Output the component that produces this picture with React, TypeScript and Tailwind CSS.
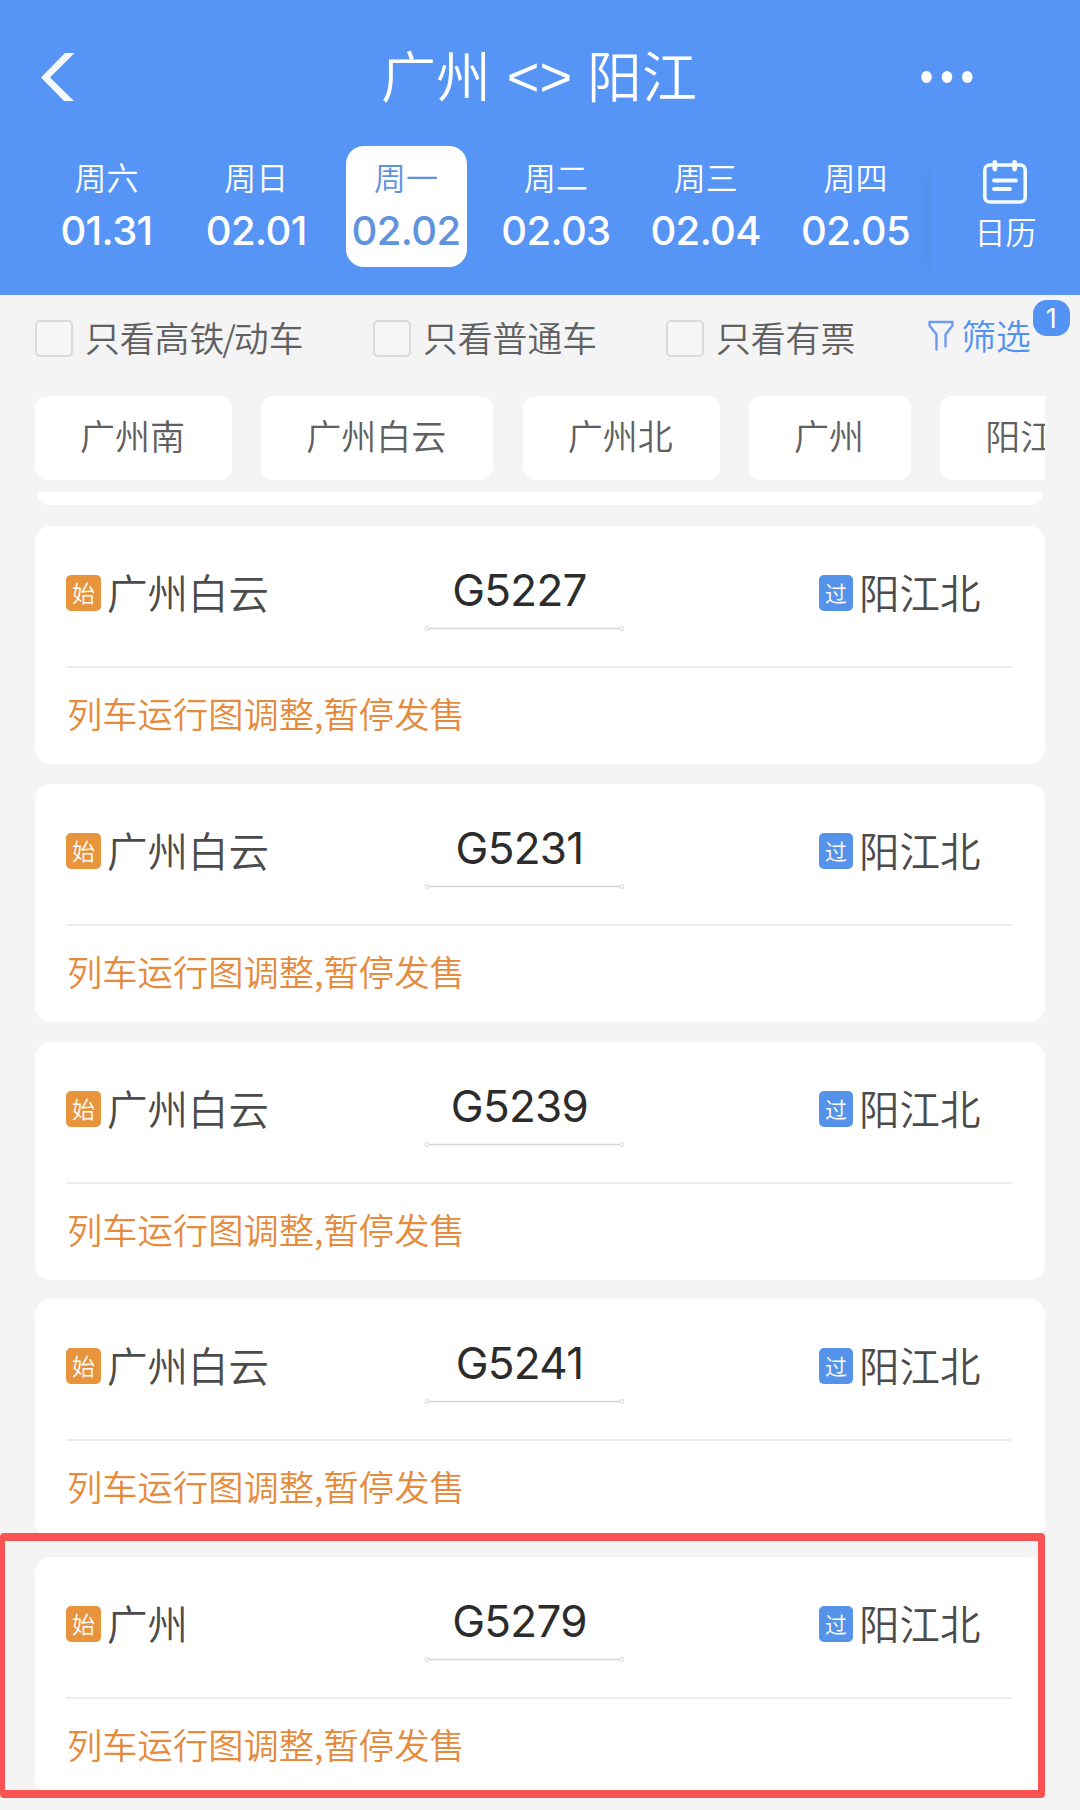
const days = [
  { week: "周六", date: "01.31" },
  { week: "周日", date: "02.01" },
  { week: "周一", date: "02.02", active: true },
  { week: "周二", date: "02.03" },
  { week: "周三", date: "02.04" },
  { week: "周四", date: "02.05" },
];

const stations = ["广州南", "广州白云", "广州北", "广州", "阳江"];

const trains = [
  { from: "广州白云", code: "G5227", to: "阳江北" },
  { from: "广州白云", code: "G5231", to: "阳江北" },
  { from: "广州白云", code: "G5239", to: "阳江北" },
  { from: "广州白云", code: "G5241", to: "阳江北" },
  { from: "广州", code: "G5279", to: "阳江北" },
];

function BackIcon() {
  return (
    <svg aria-hidden="true" className="h-12 w-[34px]" viewBox="0 0 34 48" fill="#f4fbff">
      <path d="M24 0h9.500L9 24.500 33 48H23L0 24.500 24 0Z" />
    </svg>
  );
}

function MoreIcon() {
  return (
    <svg aria-hidden="true" className="h-3 w-[52px]" viewBox="0 0 52 12" fill="#fff">
      <ellipse cx="5.5" cy="6" rx="5.3" ry="6" />
      <ellipse cx="26" cy="6" rx="5.3" ry="6" />
      <ellipse cx="46.3" cy="6" rx="5.3" ry="6" />
    </svg>
  );
}

function CalendarIcon() {
  return (
    <svg aria-hidden="true" className="h-11 w-[46px]" viewBox="0 0 46 44" fill="none" stroke="#f4fbff" strokeLinecap="round">
      <rect x="2.8" y="5" width="40.4" height="37" rx="5" strokeWidth="3.6" />
      <path d="M12.800 2.500v6.500M32.600 2.500v6.500" strokeWidth="4.8" />
      <path d="M12 20.500h22M12 29h16" strokeWidth="3.8" />
    </svg>
  );
}

function FunnelIcon() {
  return (
    <svg aria-hidden="true" className="h-[31px] w-[26px]" viewBox="0 0 26 31" fill="none" stroke="#6f9bef" strokeWidth="2.4" strokeLinejoin="round" strokeLinecap="round">
      <path d="M8.500 29.500V14.500L1.500 5.500V2h23v3.500L17.500 14.500V26.500" />
    </svg>
  );
}

function CheckItem({ label }: { label: string }) {
  return (
    <label className="flex items-start gap-[12px]">
      <span className="h-[37px] w-[38px] rounded-[5px] border-2 border-[#d9dadc] bg-[#f5f6f7]" />
      <span className="-mt-[2px] whitespace-nowrap text-[34.800px] leading-[38px] text-[#5f6062]">
        {label.split("/").map((part, i) => (
          <span key={part}>
            {i > 0 && <span className="-mx-[2px]">/</span>}
            {part}
          </span>
        ))}
      </span>
    </label>
  );
}

function TrainCard({ from, code, to }: { from: string; code: string; to: string }) {
  return (
    <article className="h-[238px] shrink-0 rounded-[16px] bg-white pl-[31px] pr-[33px]">
      <div className="flex h-[142px] border-b-2 border-[#ececed] pt-[43px]">
        <div className="flex w-[358px] items-start">
          <span className="mt-[6px] grid h-[36px] w-[35px] place-items-center rounded-[5px] bg-[#e8943c] pb-px text-[23px] leading-none text-white">始</span>
          <span className="-mt-px ml-[6px] text-[40.500px] leading-[48px] text-[#4b4b4b]">{from}</span>
        </div>
        <div className="flex w-[201px] flex-col items-center">
          <span className="-mt-px mr-[10px] font-[Inter] text-[44px] font-normal leading-[44px] tracking-[-0.7px] text-[#2c2c2c]">{code}</span>
          <svg aria-hidden="true" className="mt-[13px] h-[7px] w-[201px]" viewBox="0 0 201 7" fill="#fff" stroke="#d6d6d7">
            <path d="M5 3.500h191" strokeWidth="1.500" />
            <circle cx="3" cy="3.500" r="2" />
            <circle cx="198" cy="3.500" r="2" />
          </svg>
        </div>
        <div className="ml-auto flex w-[193px] items-start">
          <span className="mt-[6px] grid h-[36px] w-[34px] place-items-center rounded-[5px] bg-[#5592ea] pb-[2px] text-[22px] leading-none text-white">过</span>
          <span className="-mt-px ml-[6px] whitespace-nowrap text-[40.500px] leading-[48px] text-[#4b4b4b]">{to}</span>
        </div>
      </div>
      <p className="mt-[25px] pl-px text-[35.300px] leading-[40px] text-[#e58b3e]">列车运行图调整,暂停发售</p>
    </article>
  );
}

export default function App() {
  return (
    <div className="relative flex h-[1810px] w-[1080px] flex-col overflow-hidden bg-[#f4f4f5] font-['Noto_Sans_CJK_SC',sans-serif] font-[350]">
      <header className="h-[295px] shrink-0 bg-[#5695f6] text-white">
        <div className="flex h-[146px] items-start justify-between pl-[41px] pr-[107px] pt-[44px]">
          <div className="w-[340px] pt-[9px]">
            <BackIcon />
          </div>
          <h1 className="-mt-[3px] flex h-[64px] w-[316px] items-center justify-between text-[55px] leading-[64px]">
            <span>广州</span>
            <span className="mt-[8px] ml-px flex font-['Liberation_Sans'] text-[56px] font-normal">&lt;&gt;</span>
            <span>阳江</span>
          </h1>
          <div className="flex w-[276px] justify-end pt-[27px]">
            <MoreIcon />
          </div>
        </div>
        <div className="flex">
          <div className="flex gap-[28.800px] pl-[46px]">
            {days.map((day) => (
              <div
                key={day.date}
                className={`flex h-[121px] w-[121px] flex-col items-center rounded-[18px] pt-[12px] ${
                  day.active ? "bg-white text-[#5f93de]" : ""
                }`}
              >
                <span className="text-[32px] leading-[36px]">{day.week}</span>
                <span className="mt-[15px] font-[Inter] text-[40px] font-medium leading-[44px] tracking-[-0.6px]">{day.date}</span>
              </div>
            ))}
          </div>
          <div className="mt-[12px] h-[126px] w-[15px] bg-linear-to-r from-[#5695f6] to-[#5290ea] mask-y-from-80%" />
          <div className="flex flex-1 flex-col items-center pt-[14px]">
            <CalendarIcon />
            <span className="mt-[9px] text-[31px] leading-[36px]">日历</span>
          </div>
        </div>
      </header>

      <div className="flex h-[101px] shrink-0 items-start pl-[35px] pt-[25px]">
        <div className="w-[338px]">
          <CheckItem label="只看高铁/动车" />
        </div>
        <div className="w-[293px]">
          <CheckItem label="只看普通车" />
        </div>
        <CheckItem label="只看有票" />
        <div className="relative ml-[73px] flex items-start gap-[7px]">
          <FunnelIcon />
          <span className="-mt-[4px] text-[34.800px] leading-[38px] text-[#5093f2]">筛选</span>
          <span className="absolute -right-[39px] -top-[20px] grid h-[36px] w-[37px] place-items-center rounded-[14px] bg-[#5293f3] font-[Inter] text-[27px] font-normal leading-none text-white">
            1
          </span>
        </div>
      </div>

      <div className="mx-[35px] flex shrink-0 gap-[29.300px] overflow-hidden">
        {stations.map((name) => (
          <button key={name} className="h-[84px] shrink-0 rounded-[12px] bg-white pb-[6px] pl-[45px] pr-[47px] text-[35px] text-[#5f6062]">
            {name}
          </button>
        ))}
      </div>

      <div className="mx-[37px] mt-[12px] h-[13px] shrink-0 rounded-b-[12px] bg-white" />

      <main className="mx-[35px] mt-[21px] flex flex-col gap-[19.800px]">
        {trains.map((train) => (
          <TrainCard key={train.code} {...train} />
        ))}
      </main>

      {/* highlight frame over the last train */}
      <div className="absolute left-0 top-[1533px] h-[265px] w-[1045px] rounded-[4px] border-y-8 border-l-[5px] border-r-[7px] border-[#f95354]" />
    </div>
  );
}
